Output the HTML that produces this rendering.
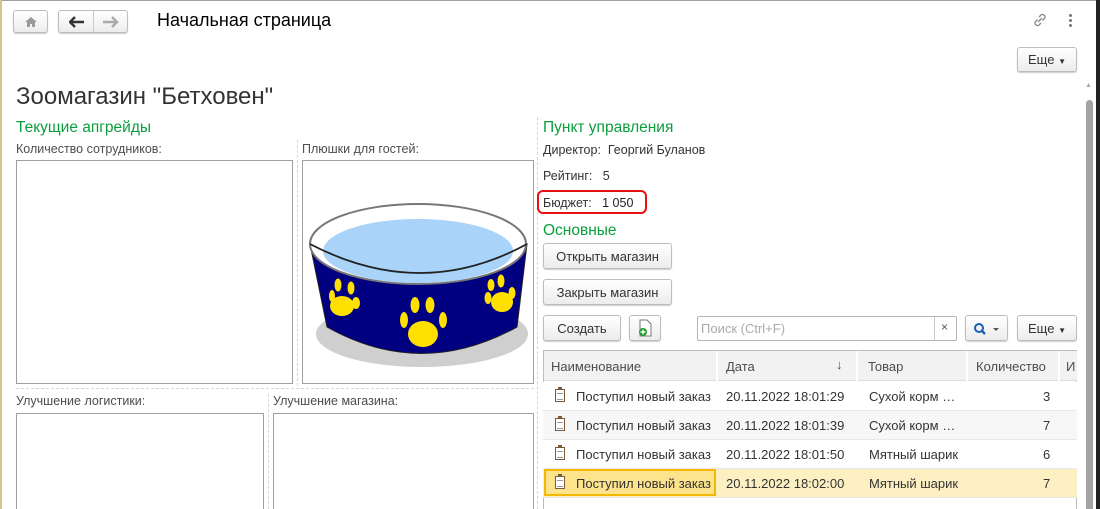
<!DOCTYPE html>
<html><head><meta charset="utf-8"><style>
*{box-sizing:border-box;margin:0;padding:0}
html,body{width:1100px;height:509px;overflow:hidden}
body{background:#fff;font-family:"Liberation Sans",Arial,sans-serif;position:relative;color:#333}
.a{position:absolute}
.t{position:absolute;white-space:nowrap}
.btn{position:absolute;border:1px solid #bdbdbd;border-radius:3px;background:linear-gradient(#fff,#ececec);box-shadow:0 1px 1px rgba(0,0,0,.2);font-size:13px;color:#333;text-align:center}
.lbl{font-size:12.5px;color:#4d4d4d}
.grn{font-size:15.5px;color:#0a9e3c}
.box{position:absolute;border:1px solid #a0a0a0;background:#fff}
.dv{position:absolute;border-left:1px dashed #d5d5d5}
.dh{position:absolute;border-top:1px dashed #d5d5d5}
.row{position:absolute;left:543px;width:534px;height:29px;border-bottom:1px solid #e8e8e8;font-size:13px;color:#333}
.row span{position:absolute;top:7px;white-space:nowrap}
.ic{position:absolute;left:12px;top:7px;width:10px;height:13px;border:1px solid #7a5a3a;background:#fff}
.ic:before{content:"";position:absolute;left:2px;top:-3px;width:4px;height:3px;background:#7a5a3a}
.ic:after{content:"";position:absolute;left:1px;top:3px;width:6px;height:5px;border-top:1px solid #999;border-bottom:1px solid #999}
</style></head><body>
<div class="a" style="left:0;top:0;width:1100px;height:1px;background:#a0a0a0"></div>
<div class="a" style="left:0;top:0;width:2px;height:509px;background:#d4c48a"></div>
<div class="a" style="left:1096px;top:0;width:4px;height:509px;background:#222"></div>

<div class="btn" style="left:13px;top:10px;width:35px;height:23px"><svg width="14" height="12" viewBox="0 0 14 12" style="margin-top:5px"><path d="M7 1L1 6h2v5h3V8h2v3h3V6h2z" fill="#9a9a9a"/></svg></div>
<div class="btn" style="left:58px;top:10px;width:70px;height:23px"><div class="a" style="left:34px;top:0;width:1px;height:21px;background:#ccc"></div>
<svg class="a" style="left:10px;top:5px" width="16" height="12"><path d="M1 6h14M6 1L1 6l5 5" stroke="#333" stroke-width="2.4" fill="none"/></svg>
<svg class="a" style="left:44px;top:5px" width="16" height="12"><path d="M0 6h14M9 1l5 5-5 5" stroke="#aaa" stroke-width="2.4" fill="none"/></svg></div>
<div class="t" style="left:157px;top:10px;font-size:18px;color:#000">Начальная страница</div>
<svg class="a" style="left:1032px;top:12px" width="16" height="16"><path d="M6 10l4-4M7 5l2-2a2.5 2.5 0 013.5 3.5l-2 2M9 11l-2 2a2.5 2.5 0 01-3.5-3.5l2-2" stroke="#888" stroke-width="1.3" fill="none"/></svg>
<div class="a" style="left:1069px;top:14px;width:3px;height:3px;background:#777;border-radius:2px;box-shadow:0 5px 0 #777,0 10px 0 #777"></div>
<div class="btn" style="left:1017px;top:47px;width:60px;height:25px;padding-top:4px">Еще <span style="font-size:8px">▼</span></div>

<div class="a" style="left:1086px;top:100px;width:7px;height:409px;background:#a3a3a3;border-radius:4px 4px 0 0"></div>
<div class="t" style="left:1085px;top:82px;font-size:7px;color:#aaa">▲</div>

<div class="t" style="left:16px;top:83px;font-size:24px;color:#333">Зоомагазин "Бетховен"</div>
<div class="t grn" style="left:16px;top:119px">Текущие апгрейды</div>
<div class="dv" style="left:537px;top:117px;height:392px"></div>
<div class="dv" style="left:297px;top:140px;height:246px"></div>
<div class="dh" style="left:16px;top:388px;width:518px"></div>
<div class="dv" style="left:268px;top:394px;height:115px"></div>

<div class="t lbl" style="left:16px;top:142px">Количество сотрудников:</div>
<div class="box" style="left:16px;top:160px;width:277px;height:224px"></div>
<div class="t lbl" style="left:302px;top:142px">Плюшки для гостей:</div>
<div class="box" style="left:302px;top:160px;width:232px;height:224px">
<svg width="230" height="222" viewBox="302 161 230 222">
<ellipse cx="421" cy="334" rx="106" ry="33" fill="#cfcfcf"/>
<path d="M309 244 L326 327 Q420 380 516 327 L526 244 Q420 300 309 244Z" fill="#000080" stroke="#222" stroke-width="1"/>
<ellipse cx="417" cy="244" rx="108" ry="40" fill="#fff" stroke="#777" stroke-width="2"/>
<ellipse cx="417" cy="251" rx="95" ry="32" fill="#a9d3f8"/>
<path d="M309 244 Q420 302 526 244" fill="none" stroke="#222" stroke-width="1.8"/>
<g fill="#ffe000">
<ellipse cx="341" cy="306" rx="12" ry="10"/><ellipse cx="331" cy="296" rx="3" ry="6"/><ellipse cx="337" cy="285" rx="3.5" ry="6.5"/><ellipse cx="350" cy="288" rx="3.5" ry="6.5"/><ellipse cx="355" cy="303" rx="4" ry="6"/>
<ellipse cx="422" cy="334" rx="15" ry="13"/><ellipse cx="403" cy="320" rx="4" ry="8"/><ellipse cx="414" cy="305" rx="4.5" ry="8"/><ellipse cx="429" cy="305" rx="4.5" ry="8"/><ellipse cx="442" cy="320" rx="4" ry="8"/>
<ellipse cx="501" cy="302" rx="11" ry="10"/><ellipse cx="487" cy="298" rx="3.5" ry="6"/><ellipse cx="490" cy="285" rx="3.5" ry="6"/><ellipse cx="500" cy="281" rx="3.5" ry="6.5"/><ellipse cx="511" cy="293" rx="3.5" ry="6"/>
</g></svg></div>
<div class="t lbl" style="left:16px;top:394px">Улучшение логистики:</div>
<div class="box" style="left:16px;top:413px;width:248px;height:96px;border-bottom:none"></div>
<div class="t lbl" style="left:273px;top:394px">Улучшение магазина:</div>
<div class="box" style="left:273px;top:413px;width:261px;height:96px;border-bottom:none"></div>

<div class="t grn" style="left:543px;top:119px">Пункт управления</div>
<div class="t lbl" style="left:543px;top:143px;color:#333">Директор: &nbsp;Георгий Буланов</div>
<div class="t lbl" style="left:543px;top:169px;color:#333">Рейтинг: &nbsp;&nbsp;5</div>
<div class="a" style="left:537px;top:190px;width:110px;height:24px;border:2px solid #e81010;border-radius:6px"></div>
<div class="t lbl" style="left:543px;top:196px;color:#333">Бюджет: &nbsp;&nbsp;<span style="color:#222">1 050</span></div>
<div class="t grn" style="left:543px;top:222px">Основные</div>
<div class="btn" style="left:543px;top:243px;width:129px;height:26px;padding-top:5px">Открыть магазин</div>
<div class="btn" style="left:543px;top:279px;width:129px;height:26px;padding-top:5px">Закрыть магазин</div>

<div class="btn" style="left:543px;top:315px;width:78px;height:26px;padding-top:5px">Создать</div>
<div class="btn" style="left:629px;top:315px;width:32px;height:26px"><svg width="16" height="18" style="margin-top:3px"><path d="M3 1h7l4 4v12H3z" fill="#fff" stroke="#777"/><circle cx="6" cy="13" r="4" fill="#1c9a2a"/><path d="M6 10.5v5M3.5 13h5" stroke="#fff" stroke-width="1.4"/></svg></div>
<div class="a" style="left:697px;top:316px;width:260px;height:25px;border:1px solid #b5b5b5;border-radius:2px;background:#fff"><span class="t" style="left:3px;top:4px;font-size:13px;color:#aaa">Поиск (Ctrl+F)</span><div class="a" style="left:236px;top:0;width:1px;height:23px;background:#ccc"></div><span class="t" style="left:243px;top:3px;font-size:12px;color:#555">×</span></div>
<div class="btn" style="left:965px;top:315px;width:43px;height:26px"><svg width="30" height="14" style="margin-top:6px"><circle cx="7" cy="6" r="4" fill="none" stroke="#1a5fb4" stroke-width="2"/><path d="M10 9l3 3" stroke="#1a5fb4" stroke-width="2.5"/><path d="M21 6h6l-3 3z" fill="#555"/></svg></div>
<div class="btn" style="left:1017px;top:315px;width:60px;height:26px;padding-top:5px">Еще <span style="font-size:8px">▼</span></div>

<div class="a" style="left:543px;top:350px;width:534px;height:159px;border:1px solid #bdbdbd;border-bottom:none;background:#fff"></div>
<div class="a" style="left:544px;top:351px;width:533px;height:30px;background:#f2f2f2;border-bottom:1px solid #ddd;font-size:13px;color:#4d4d4d">
<span class="t" style="left:7px;top:8px">Наименование</span>
<span class="t" style="left:182px;top:8px">Дата</span><span class="t" style="left:292px;top:6px">↓</span>
<span class="t" style="left:324px;top:8px">Товар</span>
<span class="t" style="left:432px;top:8px">Количество</span>
<span class="t" style="left:522px;top:8px">И</span>
<div class="a" style="left:172px;top:0;width:2px;height:30px;background:#fff"></div>
<div class="a" style="left:312px;top:0;width:2px;height:30px;background:#fff"></div>
<div class="a" style="left:422px;top:0;width:2px;height:30px;background:#fff"></div>
<div class="a" style="left:514px;top:0;width:2px;height:30px;background:#fff"></div>
</div>
<div class="row" style="top:382px;background:#fff"><div class="ic"></div><span style="left:33px">Поступил новый заказ</span><span style="left:183px">20.11.2022 18:01:29</span><span style="left:326px">Сухой корм …</span><span style="left:500px">3</span></div>
<div class="row" style="top:411px;background:#f7f7f7"><div class="ic"></div><span style="left:33px">Поступил новый заказ</span><span style="left:183px">20.11.2022 18:01:39</span><span style="left:326px">Сухой корм …</span><span style="left:500px">7</span></div>
<div class="row" style="top:440px;background:#fff"><div class="ic"></div><span style="left:33px">Поступил новый заказ</span><span style="left:183px">20.11.2022 18:01:50</span><span style="left:326px">Мятный шарик</span><span style="left:500px">6</span></div>
<div class="row" style="top:469px;background:#fcf0c2"><div class="a" style="left:1px;top:0;width:172px;height:27px;background:#fde38c;border:2px solid #f3b800"></div><div class="ic"></div><span style="left:33px">Поступил новый заказ</span><span style="left:183px">20.11.2022 18:02:00</span><span style="left:326px">Мятный шарик</span><span style="left:500px">7</span></div>
</body></html>
